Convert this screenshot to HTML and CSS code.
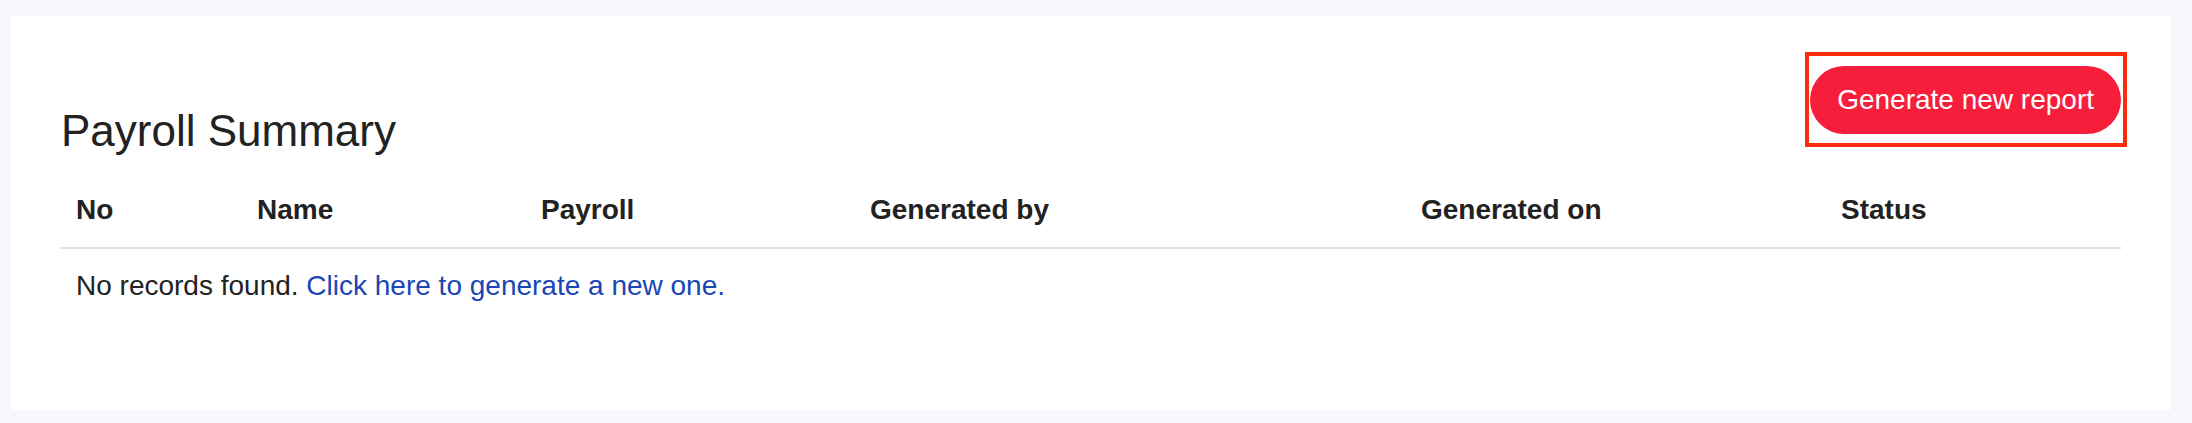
FILE: index.html
```html
<!DOCTYPE html>
<html lang="en">
<head>
    <meta charset="UTF-8">
    <meta name="viewport" content="width=device-width, initial-scale=1.0">
    <title>Payroll Summary</title>
    <link rel="stylesheet" href="styles.css">
</head>
<body>
    <div class="card">
        <div class="card-header">
            <h2 class="title">Payroll Summary</h2>
            <button class="generate-button highlighted">Generate new report</button>
        </div>
        <table class="summary-table">
            <thead>
                <tr>
                    <th class="col-no">No</th>
                    <th class="col-name">Name</th>
                    <th class="col-payroll">Payroll</th>
                    <th class="col-by">Generated by</th>
                    <th class="col-on">Generated on</th>
                    <th class="col-status">Status</th>
                </tr>
            </thead>
            <tbody>
                <tr>
                    <!-- Empty state -->
                    <td colspan="6">No records found. <a href="#" class="empty-link">Click here to generate a new one.</a></td>
                </tr>
            </tbody>
        </table>
    </div>
</body>
</html>
```

FILE: styles.css
```css
body {
    font-family: "Liberation Sans", Arial, Helvetica, sans-serif;
    margin: 0;
    padding: 16px 21px 13px 11px;
    background-color: #f7f8fc;
    color: #222;
}
.card {
    background-color: #fff;
    padding: 50px 50px 93px 50px;
}
.card-header {
    display: flex;
    justify-content: space-between;
    align-items: flex-start;
    margin-bottom: 16px;
}
.title {
    margin: 39px 0 0 0;
    font-size: 44px;
    line-height: 51px;
    font-weight: normal;
    color: #222;
}
.generate-button {
    position: relative;
    background-color: #f71e3c;
    color: #fff;
    border: none;
    border-radius: 34px;
    padding: 18px 27px;
    font-family: inherit;
    font-size: 28px;
    line-height: 32px;
    cursor: pointer;
}
/* annotation frame drawn over the button */
.highlighted::after {
    content: "";
    position: absolute;
    top: -14px;
    right: -6px;
    bottom: -13px;
    left: -5px;
    border: 4px solid #fa2c0c;
    pointer-events: none;
}
.summary-table {
    width: 100%;
    border-collapse: collapse;
    table-layout: fixed;
    font-size: 28px;
    line-height: 32px;
}
.summary-table th {
    box-sizing: border-box;
    text-align: left;
    font-weight: bold;
    padding: 22px 15px 21px 15px;
    border-bottom: 2px solid #dedede;
}
.summary-table td {
    padding: 21px 15px 15px 15px;
}
.col-no { width: 181px; }
.col-name { width: 284px; }
.col-payroll { width: 329px; }
.col-by { width: 551px; }
.col-on { width: 420px; }
.col-status { width: 295px; }
.empty-link {
    color: #1a46b4;
    text-decoration: none;
}
```
